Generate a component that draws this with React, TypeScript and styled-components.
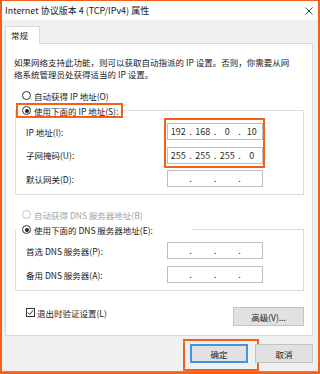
import React from 'react';
import styled, { createGlobalStyle, css } from 'styled-components';

const ORANGE = '#f2601c';

const GlobalStyle = createGlobalStyle`
  html, body { margin: 0; padding: 0; background: #ffffff; }
  body {
    font-family: "Noto Sans CJK SC", "Noto Sans", sans-serif;
    color: #1a1a1a;
  }
  * { box-sizing: border-box; }
`;

const Frame = styled.div`
  width: 320px;
  height: 374px;
  border-style: solid;
  border-color: ${ORANGE};
  border-width: 1px 2px 2px 2px;
  display: flex;
  flex-direction: column;
  overflow: hidden;
`;

const TitleBar = styled.div`
  height: 19px;
  flex: none;
  background: #ffffff;
  display: flex;
  align-items: center;
  justify-content: space-between;
  padding: 0 5px 0 3px;
  font-size: 9px;
  line-height: 19px;
  color: #1a1a1a;
  white-space: nowrap;
`;

const CloseIcon = styled.svg`
  width: 8px;
  height: 8px;
  display: block;
`;

const Body = styled.div`
  flex: 1;
  background: #f0f0f0;
  padding: 6px 5px 0 3px;
  display: flex;
  flex-direction: column;
  border-bottom: 1px solid #6d9dd3;
`;

const TabStrip = styled.div`
  display: flex;
  position: relative;
  z-index: 1;
  margin-bottom: -1px;
`;

const Tab = styled.div`
  width: 35px;
  height: 18px;
  background: #ffffff;
  border: 1px solid #d9d9d9;
  border-bottom: none;
  font-size: 8.5px;
  line-height: 16px;
  padding-left: 5px;
`;

const Panel = styled.div`
  background: #ffffff;
  border: 1px solid #d9d9d9;
  padding: 12px 8px 9px 8px;
  display: flex;
  flex-direction: column;
`;

const Description = styled.p`
  margin: 0;
  font-size: 8.5px;
  line-height: 12px;
  white-space: nowrap;
`;

const RadioRow = styled.div<{ $disabled?: boolean; $top?: number }>`
  display: flex;
  align-items: center;
  height: 15px;
  margin-top: ${(p) => p.$top ?? 0}px;
  padding-left: 8px;
  font-size: 8.5px;
  gap: 3px;
  color: ${(p) => (p.$disabled ? '#a3a3a3' : '#1a1a1a')};
  white-space: nowrap;
`;

const RadioDot = styled.span<{ $checked?: boolean; $disabled?: boolean }>`
  width: 9px;
  height: 9px;
  border-radius: 50%;
  border: 1px solid ${(p) => (p.$disabled ? '#c4c4c4' : '#333333')};
  background: #ffffff;
  display: inline-flex;
  align-items: center;
  justify-content: center;
  flex: none;
  &::after {
    content: '';
    width: 4px;
    height: 4px;
    border-radius: 50%;
    background: ${(p) => (p.$checked ? '#222222' : 'transparent')};
  }
`;

const Group = styled.fieldset<{ $top?: number }>`
  margin: ${(p) => p.$top ?? 0}px 0 0 1px;
  padding: 5px 0 7px 0;
  border: 1px solid #dcdcdc;
  min-width: 0;
`;

const Legend = styled.legend<{ $highlight?: boolean; $width?: number }>`
  display: flex;
  align-items: center;
  gap: 3px;
  height: 15px;
  padding: 0 3px 0 4px;
  margin: 0;
  border: 2px solid ${(p) => (p.$highlight ? ORANGE : 'transparent')};
  font-size: 8.5px;
  white-space: nowrap;
  background: #ffffff;
  ${(p) =>
    p.$width
      ? css`
          width: ${p.$width}px;
        `
      : ''}
`;

const FieldRow = styled.div<{ $gap?: number }>`
  display: flex;
  align-items: center;
  height: 17px;
  padding-left: 10px;
  margin-top: ${(p) => p.$gap ?? 0}px;
`;

const FieldLabel = styled.span`
  width: 141px;
  flex: none;
  font-size: 8.5px;
  white-space: nowrap;
`;

const IpBox = styled.div<{ $annotate?: boolean }>`
  width: 96px;
  height: 17px;
  border: 1px solid #bdbdbd;
  background: #ffffff;
  display: flex;
  align-items: center;
  font-size: 9px;
  color: #2a2a2a;
  position: relative;
  ${(p) =>
    p.$annotate &&
    css`
      &::after {
        content: '';
        position: absolute;
        left: -4px;
        top: -6px;
        right: -3px;
        bottom: -29px;
        border: 2px solid ${ORANGE};
        pointer-events: none;
      }
    `}
`;

const Octet = styled.span`
  flex: 1;
  text-align: center;
  line-height: 15px;
`;

const Dot = styled.span`
  width: 4px;
  flex: none;
  text-align: center;
  line-height: 15px;
`;

const PanelFooter = styled.div`
  display: flex;
  justify-content: space-between;
  align-items: flex-start;
  margin: 16px 0 0 1px;
  padding-left: 11px;
`;

const CheckRow = styled.label`
  display: flex;
  align-items: center;
  gap: 2px;
  height: 11px;
  font-size: 8.5px;
  white-space: nowrap;
`;

const CheckBox = styled.span`
  width: 9px;
  height: 9px;
  border: 1px solid #333333;
  background: #ffffff;
  display: inline-flex;
  align-items: center;
  justify-content: center;
  flex: none;
`;

const Button = styled.button<{ $default?: boolean; $w?: number; $annotate?: boolean }>`
  width: ${(p) => p.$w ?? 58}px;
  height: 19px;
  padding: 0;
  background: #e1e1e1;
  border: ${(p) => (p.$default ? '2px solid #4493de' : '1px solid #c4c4c4')};
  font-family: "Noto Sans CJK SC", "Noto Sans", sans-serif;
  font-size: 8.5px;
  color: #1a1a1a;
  position: relative;
  ${(p) =>
    p.$annotate &&
    css`
      &::after {
        content: '';
        position: absolute;
        left: -9px;
        top: -7px;
        right: -13px;
        bottom: -10px;
        border: 2px solid ${ORANGE};
        pointer-events: none;
      }
    `}
`;

const DialogButtons = styled.div`
  display: flex;
  justify-content: flex-end;
  gap: 7px;
  margin-top: 8px;
`;

function IpField({ values, annotate }: { values: string[]; annotate?: boolean }) {
  return (
    <IpBox $annotate={annotate}>
      <Octet>{values[0]}</Octet>
      <Dot>.</Dot>
      <Octet>{values[1]}</Octet>
      <Dot>.</Dot>
      <Octet>{values[2]}</Octet>
      <Dot>.</Dot>
      <Octet>{values[3]}</Octet>
    </IpBox>
  );
}

const empty = ['', '', '', ''];

export default function App() {
  return (
    <>
      <GlobalStyle />
      <Frame>
        <TitleBar>
          <span>Internet 协议版本 4 (TCP/IPv4) 属性</span>
          <CloseIcon viewBox="0 0 8 8">
            <path d="M0.5 0.5 L7.5 7.5 M7.5 0.5 L0.5 7.5" stroke="#333" strokeWidth="0.9" fill="none" />
          </CloseIcon>
        </TitleBar>
        <Body>
          <TabStrip>
            <Tab>常规</Tab>
          </TabStrip>
          <Panel>
            <Description>
              如果网络支持此功能，则可以获取自动指派的 IP 设置。否则，你需要从网
              <br />
              络系统管理员处获得适当的 IP 设置。
            </Description>
            <RadioRow $top={8}>
              <RadioDot />
              自动获得 IP 地址(O)
            </RadioRow>
            <Group>
              <Legend $highlight>
                <RadioDot $checked />
                使用下面的 IP 地址(S):
              </Legend>
              <FieldRow>
                <FieldLabel>IP 地址(I):</FieldLabel>
                <IpField values={['192', '168', '0', '10']} annotate />
              </FieldRow>
              <FieldRow $gap={6.5}>
                <FieldLabel>子网掩码(U):</FieldLabel>
                <IpField values={['255', '255', '255', '0']} />
              </FieldRow>
              <FieldRow $gap={6.5}>
                <FieldLabel>默认网关(D):</FieldLabel>
                <IpField values={empty} />
              </FieldRow>
            </Group>
            <RadioRow $top={12} $disabled>
              <RadioDot $disabled />
              自动获得 DNS 服务器地址(B)
            </RadioRow>
            <Group>
              <Legend $width={176}>
                <RadioDot $checked />
                使用下面的 DNS 服务器地址(E):
              </Legend>
              <FieldRow>
                <FieldLabel>首选 DNS 服务器(P):</FieldLabel>
                <IpField values={empty} />
              </FieldRow>
              <FieldRow $gap={7}>
                <FieldLabel>备用 DNS 服务器(A):</FieldLabel>
                <IpField values={empty} />
              </FieldRow>
            </Group>
            <PanelFooter>
              <CheckRow>
                <CheckBox>
                  <svg width="7" height="7" viewBox="0 0 7 7">
                    <path d="M0.8 3.6 L2.7 5.5 L6.2 1.2" stroke="#222" strokeWidth="0.9" fill="none" />
                  </svg>
                </CheckBox>
                退出时验证设置(L)
              </CheckRow>
              <Button $w={71}>高级(V)...</Button>
            </PanelFooter>
          </Panel>
          <DialogButtons>
            <Button $default $annotate>确定</Button>
            <Button>取消</Button>
          </DialogButtons>
        </Body>
      </Frame>
    </>
  );
}
